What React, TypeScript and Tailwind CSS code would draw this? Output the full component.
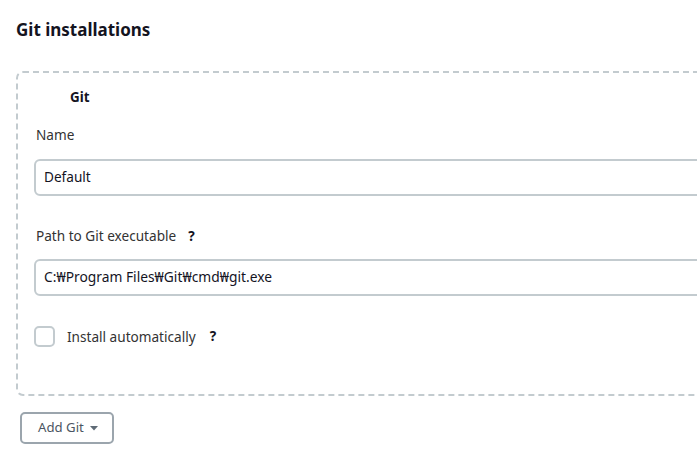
import React from "react";

export default function App() {
  return (
    <div
      className="w-[697px] h-[466px] overflow-hidden bg-white text-[#333] pl-4"
      style={{ fontFamily: '"Noto Sans", "Noto Sans CJK KR", sans-serif' }}
    >
      <h2 className="pt-[18px] text-[17px] font-bold text-[#14141f] leading-[24px]">
        Git installations
      </h2>
      <div className="mt-[29px] w-[720px] border-2 border-dashed border-[#c3cbcf] rounded-[7px] pl-4 pt-[14px] pb-[47px]">
        <div className="pl-[36px] text-[13.4px] font-bold text-[#14141f] leading-[20px]">Git</div>
        <div className="mt-[18px] pl-[2px] text-[13.6px] leading-[20px]">Name</div>
        <div className="mt-[14px] h-[37px] border-2 border-[#c3cbcf] rounded-[6px] flex items-center pl-[8px] text-[13.6px] text-[#14141f]">
          Default
        </div>
        <div className="mt-[30px] pl-[2px] text-[13.6px] leading-[20px] flex items-center">
          <span>Path to Git executable</span>
          <span className="ml-[12px] font-bold text-[#14141f]">?</span>
        </div>
        <div className="mt-[13px] h-[37px] border-2 border-[#c3cbcf] rounded-[6px] flex items-center pl-[8px] text-[13.8px] text-[#14141f]">
          C:₩Program Files₩Git₩cmd₩git.exe
        </div>
        <div className="mt-[30px] flex items-center">
          <div className="w-[21px] h-[21px] border-2 border-[#c3cbcf] rounded-[5px]" />
          <span className="ml-[12px] text-[13.6px] leading-[20px]">Install automatically</span>
          <span className="ml-[14px] text-[13.6px] font-bold text-[#14141f]">?</span>
        </div>
      </div>
      <button className="mt-[16px] ml-[4px] h-[32px] pl-[16px] pr-[14px] border-2 border-[#9ba5ad] rounded-[5px] text-[13.2px] text-[#4b5563] flex items-center gap-[6px]">
        <span>Add Git</span>
        <svg width="8" height="5" viewBox="0 0 8 5">
          <path d="M0 0 L8 0 L4 4.5 Z" fill="#5f6b76" />
        </svg>
      </button>
    </div>
  );
}
